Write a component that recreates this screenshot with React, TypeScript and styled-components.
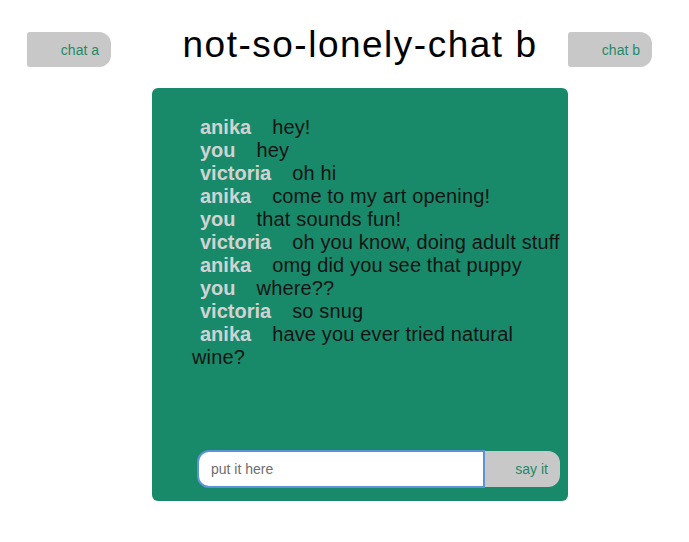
import React from "react";
import styled, { createGlobalStyle } from "styled-components";

const Global = createGlobalStyle`
  html, body { margin: 0; padding: 0; background: #fff; }
  body { font-family: "Liberation Sans", Arial, sans-serif; }
`;

const Page = styled.div`
  width: 689px;
  height: 542px;
  display: flex;
  flex-direction: column;
`;

const Header = styled.header`
  display: flex;
  align-items: flex-start;
  padding: 32px 37px 0 27px;
  height: 56px;
`;

const Tab = styled.button`
  width: 84px;
  height: 35px;
  border: none;
  background: #c8c8c8;
  color: #1f8a69;
  font-family: "Liberation Sans", Arial, sans-serif;
  font-size: 14px;
  text-align: right;
  padding: 0 12px 0 0;
  border-radius: 3px 12px 12px 3px;
  flex: none;
`;

const Title = styled.h1`
  flex: 1;
  margin: -9px 0 0 0;
  padding-left: 41px;
  text-align: center;
  font-weight: 400;
  font-size: 37px;
  letter-spacing: 1.5px;
  line-height: 44px;
  color: #000;
`;

const Panel = styled.main`
  margin-left: 152px;
  width: 416px;
  height: 413px;
  background: #188a6a;
  border-radius: 6px;
  display: flex;
  flex-direction: column;
  box-sizing: border-box;
  padding: 28px 8px 14px 40px;
`;

const List = styled.ul`
  list-style: none;
  margin: 0;
  padding: 0;
  flex: 1;
  width: 369px;
  font-size: 20px;
  letter-spacing: 0.15px;
  line-height: 23px;
  color: #141414;
`;

const Item = styled.li``;

const Name = styled.span`
  font-weight: 700;
  color: #d2d2d2;
  letter-spacing: 0;
  margin: 0 21px 0 8px;
`;

const Form = styled.form`
  display: flex;
  align-items: center;
  margin-left: 5px;
`;

const Input = styled.input`
  width: 282px;
  height: 34px;
  box-sizing: content-box;
  border: none;
  border-radius: 10px 0 0 10px;
  background: #fff;
  box-shadow: 0 0 0 2px #5b93d6;
  margin-left: 2px;
  padding: 0 0 0 12px;
  font-family: "Liberation Sans", Arial, sans-serif;
  font-size: 14px;
  color: #333;
  outline: none;
  &::placeholder { color: #6e6e6e; }
`;

const Send = styled.button`
  width: 77px;
  height: 36px;
  margin-left: 2px;
  border: none;
  background: #c8c8c8;
  color: #1f8a69;
  font-family: "Liberation Sans", Arial, sans-serif;
  font-size: 14px;
  text-align: right;
  padding: 0 12px 0 0;
  border-radius: 0 12px 12px 0;
`;

const messages: [string, string][] = [
  ["anika", "hey!"],
  ["you", "hey"],
  ["victoria", "oh hi"],
  ["anika", "come to my art opening!"],
  ["you", "that sounds fun!"],
  ["victoria", "oh you know, doing adult stuff"],
  ["anika", "omg did you see that puppy"],
  ["you", "where??"],
  ["victoria", "so snug"],
  ["anika", "have you ever tried natural wine?"],
];

export default function App() {
  return (
    <Page>
      <Global />
      <Header>
        <Tab>chat a</Tab>
        <Title>not-so-lonely-chat b</Title>
        <Tab>chat b</Tab>
      </Header>
      <Panel>
        <List>
          {messages.map(([n, m], i) => (
            <Item key={i}>
              <Name>{n}</Name>
              {m}
            </Item>
          ))}
        </List>
        <Form onSubmit={(e) => e.preventDefault()}>
          <Input placeholder="put it here" />
          <Send type="submit">say it</Send>
        </Form>
      </Panel>
    </Page>
  );
}
